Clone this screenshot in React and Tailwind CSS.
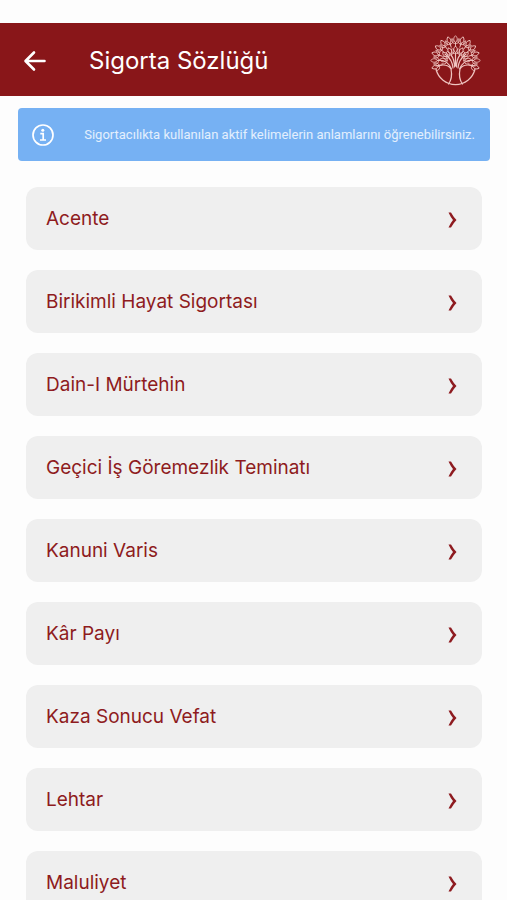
const TERMS = [
  'Acente',
  'Birikimli Hayat Sigortası',
  'Dain-I Mürtehin',
  'Geçici İş Göremezlik Teminatı',
  'Kanuni Varis',
  'Kâr Payı',
  'Kaza Sonucu Vefat',
  'Lehtar',
  'Maluliyet',
];

// angle of each leaf from straight up
const OUTER_LEAVES = [-108, -90, -72, -54, -36, -18, 0, 18, 36, 54, 72, 90, 108];
const INNER_LEAVES = [-81, -54, -27, 0, 27, 54, 81];

function BackIcon() {
  return (
    <svg viewBox="0 0 24 24" className="size-6" fill="none" stroke="currentColor" strokeWidth="2.6" strokeLinecap="round" strokeLinejoin="round" aria-hidden="true">
      <path d="M21.500 12H3.500M11 3.500 2.500 12l8.500 8.500" />
    </svg>
  );
}

function InfoIcon() {
  return (
    <svg viewBox="0 0 24 24" className="size-6 shrink-0" fill="none" stroke="currentColor" strokeWidth="1.7" aria-hidden="true">
      <circle cx="12" cy="12" r="10" />
      <circle cx="11.8" cy="7.2" r="1.5" fill="currentColor" stroke="none" />
      <path d="M9.300 10.600h2.900v6.200M9 17h6" />
    </svg>
  );
}

function ChevronIcon() {
  return (
    <svg viewBox="0 0 9 17" className="h-[17px] w-[9px] shrink-0" fill="currentColor" aria-hidden="true">
      <path d="M.5 1.500h2.500Q5.500 6 8.500 9 5.500 12 3 16.500H.5Q2.500 12 5 9 2.500 6 .5 1.500z" />
    </svg>
  );
}

function TreeLogo() {
  return (
    <svg viewBox="0 0 51 52" className="h-[52px] w-[51px]" fill="none" stroke="#efc4c0" strokeWidth="0.9" strokeLinecap="round" strokeLinejoin="round" role="img" aria-label="Logo">
      <path d="M6 34a20 20 0 0 0 39 0" strokeWidth="1.2" />
      {OUTER_LEAVES.map((angle) => (
        <path
          key={angle}
          transform={`rotate(${angle} 25.5 25.5)`}
          d="M25.500 7.500c-2.400-2-2.400-4.600 0-6.800 2.400 2.200 2.400 4.800 0 6.800M25.500 8.500c-3 .2-4.200-2-3.800-4.500M25.500 8.500c3 .2 4.200-2 3.800-4.500M25.500 7.500v4"
        />
      ))}
      {INNER_LEAVES.map((angle) => (
        <path
          key={angle}
          transform={`rotate(${angle} 25.5 27)`}
          d="M25.500 17.500c-2.400-1.800-2.400-4.200 0-6.400 2.400 2.200 2.400 4.600 0 6.400M25.500 18.500c-3.200.2-4.200-2-3.800-4.500M25.500 18.500c3.200.2 4.200-2 3.800-4.500"
        />
      ))}
      <path
        strokeWidth="1.2"
        d="M18.500 49c3-4 3.500-10 2.500-15-2-4-8-5-15-3M32.500 49c-3-4-3.500-10-2.500-15 2-4 8-5 15-3M21.500 34c-2-5-6-8.500-12-9M29.500 34c2-5 6-8.500 12-9M23 33c-.5-6-4-11-8-14M28 33c.5-6 4-11 8-14M24.500 32c0-5-1-9-3.500-12M26.500 32c0-5 1-9 3.500-12M25.500 31V19"
      />
    </svg>
  );
}

export default function App() {
  return (
    <div className="flex h-screen flex-col bg-[#fdfdfd] pt-[23px] font-['Inter',sans-serif]">
      <header className="flex h-[73px] shrink-0 items-center bg-[#891619] pt-[3px] pr-[26px] pl-[23px] text-white">
        <button type="button" aria-label="Geri">
          <BackIcon />
        </button>
        <h1 className="ml-[42px] flex-1 text-2xl">Sigorta Sözlüğü</h1>
        <TreeLogo />
      </header>

      <main className="flex-1 overflow-y-auto [scrollbar-width:none]">
        <div className="mr-[17px] ml-[18px] mt-3 flex h-[53px] items-center justify-between rounded bg-[#76b1f3] pr-[15px] pl-[13px] text-white">
          <InfoIcon />
          <p className="font-['Roboto',sans-serif] text-[13px] whitespace-nowrap text-white/80">
            Sigortacılıkta kullanılan aktif kelimelerin anlamlarını öğrenebilirsiniz.
          </p>
        </div>

        <ul className="mt-[26px] mr-[25px] ml-[26px] space-y-5 pb-5">
          {TERMS.map((term) => (
            <li key={term}>
              <button
                type="button"
                className="flex h-[63px] w-full items-center justify-between rounded-xl bg-[#efefef] pt-px pr-[25px] pl-5 text-left text-[19px] leading-7 text-[#8e1b20]"
              >
                {term}
                <ChevronIcon />
              </button>
            </li>
          ))}
        </ul>
      </main>
    </div>
  );
}
